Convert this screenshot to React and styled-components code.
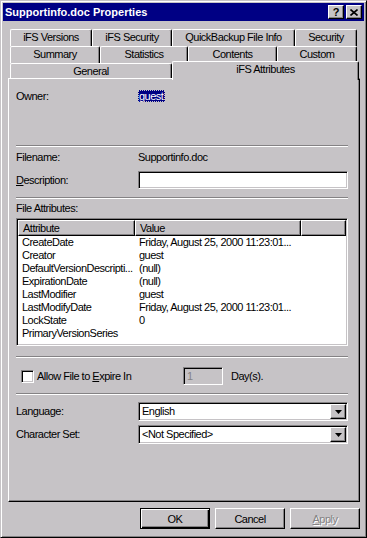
import React from 'react';
import styled, { createGlobalStyle, css } from 'styled-components';

const GlobalStyle = createGlobalStyle`
  html, body { margin: 0; padding: 0; background: #c6c3c6; }
  body {
    font-family: "Liberation Sans", Arial, sans-serif;
    font-size: 11px;
    letter-spacing: -0.5px;
    color: #000;
  }
  * { box-sizing: border-box; }
`;

const raised = css`
  border: 1px solid;
  border-color: #fff #000 #000 #fff;
  box-shadow: inset -1px -1px #848284;
  background: #c6c3c6;
`;

const sunken = css`
  border: 1px solid;
  border-color: #848284 #fff #fff #848284;
  box-shadow: inset 1px 1px #000, inset -1px -1px #c6c3c6;
`;

const Window = styled.div`
  width: 367px;
  height: 538px;
  background: #c6c3c6;
  border: 1px solid;
  border-color: #c6c3c6 #000 #000 #c6c3c6;
  box-shadow: inset 1px 1px #fff, inset -1px -1px #848284;
  padding: 2px;
  display: flex;
  flex-direction: column;
`;

const TitleBar = styled.div`
  height: 18px;
  background: #000084;
  color: #fff;
  display: flex;
  align-items: center;
  justify-content: space-between;
  padding: 0 2px;
`;

const TitleText = styled.span`
  font-weight: bold;
  letter-spacing: 0;
`;

const TitleButtons = styled.div`
  display: flex;
  gap: 0;
`;

const TitleButton = styled.div`
  ${raised};
  width: 16px;
  height: 14px;
  display: flex;
  align-items: center;
  justify-content: center;
  color: #000;
  font-weight: bold;
  font-size: 11px;
  letter-spacing: 0;
  line-height: 12px;
  margin-left: ${p => p.$gap || 0}px;
`;

const Body = styled.div`
  padding: 8px 4px 0 5px;
  display: flex;
  flex-direction: column;
`;

const TabRow = styled.div`
  display: flex;
  height: ${p => p.$h}px;
  padding-left: 2px;
`;

const Tab = styled.div`
  flex: none;
  width: ${p => p.$w}px;
  height: ${p => p.$h}px;
  border-top: 1px solid #fff;
  border-left: 1px solid #fff;
  border-right: 1px solid #000;
  border-radius: 2px 2px 0 0;
  box-shadow: inset -1px 0 #848284;
  background: #c6c3c6;
  text-align: center;
  line-height: 15px;
  white-space: nowrap;
  ${p => p.$active && css`
    margin-top: -2px;
    position: relative;
    z-index: 1;
  `}
`;

const Panel = styled.div`
  width: 352px;
  height: 424px;
  border: 1px solid;
  border-color: #fff #000 #000 #fff;
  box-shadow: inset -1px -1px #848284;
  padding: 0 11px 0 7px;
  display: flex;
  flex-direction: column;
`;

const Separator = styled.div`
  flex: none;
  height: 2px;
  border-top: 1px solid #848284;
  border-bottom: 1px solid #fff;
  margin-top: ${p => p.$mt}px;
`;

const FieldRow = styled.div`
  display: grid;
  grid-template-columns: 122px 1fr;
  align-items: center;
  min-height: 13px;
  line-height: 13px;
  margin-top: ${p => p.$mt}px;
`;

const Label = styled.div`
  line-height: 13px;
  margin-top: ${p => p.$mt || 0}px;
`;

const U = styled.span`
  text-decoration: underline;
`;

const Selected = styled.span`
  background: #000084;
  color: #fff;
  padding: 0 2px 0 1px;
  outline: 1px dotted #c6c3c6;
  outline-offset: -1px;
`;

const TextBox = styled.div`
  ${sunken};
  width: ${p => p.$w}px;
  height: 18px;
  background: ${p => (p.$disabled ? '#c6c3c6' : '#fff')};
  color: ${p => (p.$disabled ? '#848284' : '#000')};
  padding: 0 3px;
  line-height: 16px;
`;

const ListBox = styled.div`
  ${sunken};
  margin-top: 3px;
  height: 128px;
  background: #fff;
  padding: 1px;
  display: grid;
  grid-template-columns: 117px 166px 1fr;
  grid-template-rows: 16px;
  grid-auto-rows: 13px;
  align-content: start;
`;

const HeadCell = styled.div`
  ${raised};
  padding-left: 4px;
  line-height: 14px;
  white-space: nowrap;
`;

const Cell = styled.div`
  padding-left: 4px;
  line-height: 13px;
  white-space: nowrap;
  overflow: hidden;
  grid-column: ${p => (p.$wide ? '2 / 4' : 'auto')};
`;

const ExpireRow = styled.div`
  display: grid;
  grid-template-columns: 167px 40px auto;
  align-items: center;
  height: 18px;
  margin-top: 9px;
`;

const CheckLabel = styled.div`
  display: flex;
  align-items: center;
  gap: 3px;
  padding-left: 5px;
`;

const CheckBox = styled.div`
  ${sunken};
  width: 13px;
  height: 13px;
  background: #fff;
`;

const Days = styled.span`
  margin-left: 8px;
`;

const Combo = styled.div`
  ${sunken};
  width: 210px;
  height: 19px;
  background: #fff;
  display: flex;
  align-items: center;
  justify-content: space-between;
  padding: 1px 1px 1px 3px;
`;

const DropButton = styled.div`
  ${raised};
  width: 16px;
  height: 15px;
  display: flex;
  align-items: center;
  justify-content: center;
`;

const ButtonRow = styled.div`
  width: 352px;
  display: flex;
  justify-content: flex-end;
  gap: 5px;
  margin-top: 6px;
`;

const Button = styled.button`
  ${raised};
  width: 70px;
  height: 21px;
  padding: 0;
  font: inherit;
  letter-spacing: inherit;
  color: #000;
  ${p => p.$default && css`
    border-color: #000;
    box-shadow: inset 1px 1px #fff, inset -1px -1px #000, inset -2px -2px #848284;
  `}
  ${p => p.disabled && css`
    color: #848284;
    text-shadow: 1px 1px #fff;
  `}
`;

const rows1 = [['iFS Versions', 82], ['iFS Security', 80], ['QuickBackup File Info', 123], ['Security', 62]];
const rows2 = [['Summary', 90], ['Statistics', 88], ['Contents', 89], ['Custom', 80]];

const attributes = [
  ['CreateDate', 'Friday, August 25, 2000 11:23:01...'],
  ['Creator', 'guest'],
  ['DefaultVersionDescripti...', '(null)'],
  ['ExpirationDate', '(null)'],
  ['LastModifier', 'guest'],
  ['LastModifyDate', 'Friday, August 25, 2000 11:23:01...'],
  ['LockState', '0'],
  ['PrimaryVersionSeries', ''],
];

function Arrow() {
  return (
    <svg width="7" height="4" viewBox="0 0 7 4">
      <polygon points="0,0 7,0 3.5,4" fill="#000" />
    </svg>
  );
}

export default function App() {
  return (
    <>
      <GlobalStyle />
      <Window>
        <TitleBar>
          <TitleText>Supportinfo.doc Properties</TitleText>
          <TitleButtons>
            <TitleButton>?</TitleButton>
            <TitleButton $gap={2}>
              <svg width="8" height="7" viewBox="0 0 8 7">
                <path d="M0.5 0.5 L7.5 6.5 M7.5 0.5 L0.5 6.5" stroke="#000" strokeWidth="1.6" />
              </svg>
            </TitleButton>
          </TitleButtons>
        </TitleBar>
        <Body>
          <TabRow $h={17}>
            {rows1.map(([t, w]) => <Tab key={t} $w={w} $h={17}>{t}</Tab>)}
          </TabRow>
          <TabRow $h={17}>
            {rows2.map(([t, w]) => <Tab key={t} $w={w} $h={17}>{t}</Tab>)}
          </TabRow>
          <TabRow $h={15}>
            <Tab $w={162} $h={15}>General</Tab>
            <Tab $w={187} $h={19} $active>iFS Attributes</Tab>
          </TabRow>
          <Panel>
            <FieldRow $mt={11}>
              <Label>Owner:</Label>
              <div><Selected>guest</Selected></div>
            </FieldRow>
            <Separator $mt={42} />
            <FieldRow $mt={4}>
              <Label>Filename:</Label>
              <div>Supportinfo.doc</div>
            </FieldRow>
            <FieldRow $mt={7}>
              <Label><U>D</U>escription:</Label>
              <TextBox $w={210} />
            </FieldRow>
            <Separator $mt={8} />
            <Label $mt={3}>File Attributes:</Label>
            <ListBox>
              <HeadCell>Attribute</HeadCell>
              <HeadCell>Value</HeadCell>
              <HeadCell />
              {attributes.map(([a, v]) => (
                <React.Fragment key={a}>
                  <Cell>{a}</Cell>
                  <Cell $wide>{v}</Cell>
                </React.Fragment>
              ))}
            </ListBox>
            <Separator $mt={10} />
            <ExpireRow>
              <CheckLabel>
                <CheckBox />
                <span>Allow File to <U>E</U>xpire In</span>
              </CheckLabel>
              <TextBox $w={40} $disabled>1</TextBox>
              <Days>Day(s).</Days>
            </ExpireRow>
            <Separator $mt={8} />
            <FieldRow $mt={7}>
              <Label>Language:</Label>
              <Combo>
                <span>English</span>
                <DropButton><Arrow /></DropButton>
              </Combo>
            </FieldRow>
            <FieldRow $mt={4}>
              <Label>Character Set:</Label>
              <Combo>
                <span>&lt;Not Specified&gt;</span>
                <DropButton><Arrow /></DropButton>
              </Combo>
            </FieldRow>
          </Panel>
          <ButtonRow>
            <Button $default>OK</Button>
            <Button>Cancel</Button>
            <Button disabled><U>A</U>pply</Button>
          </ButtonRow>
        </Body>
      </Window>
    </>
  );
}
